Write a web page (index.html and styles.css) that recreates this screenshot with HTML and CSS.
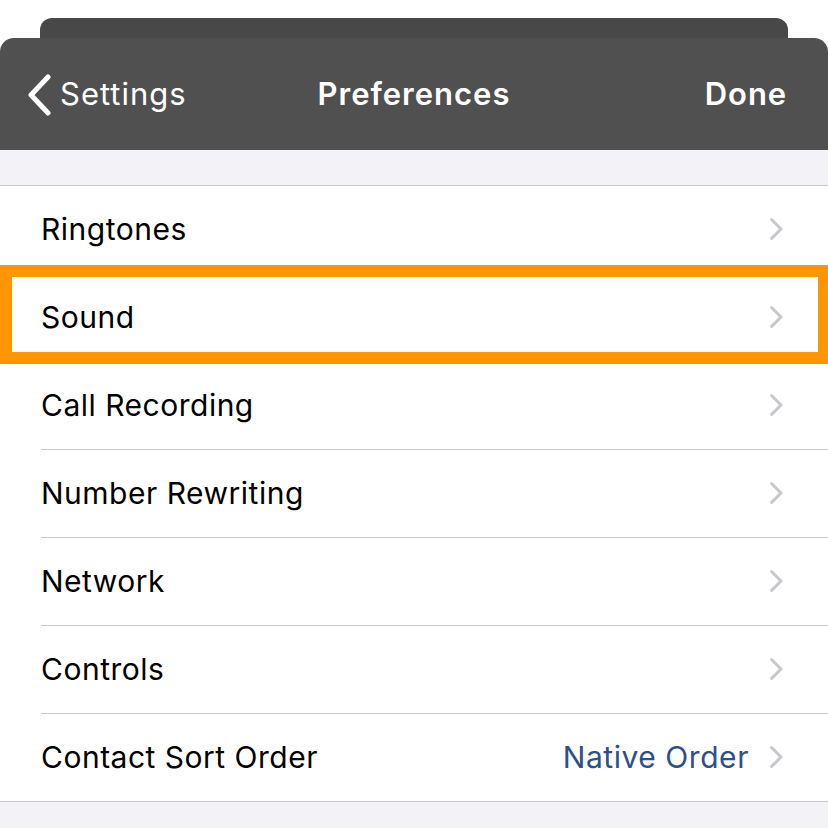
FILE: index.html
```html
<!DOCTYPE html>
<html>
<head>
<meta charset="utf-8">
<link rel="stylesheet" href="styles.css">
</head>
<body>
<div class="screen">
  <div class="sheet-back"></div>
  <div class="navbar">
    <div class="nav-left">
      <svg class="back-icon" width="26" height="42" viewBox="0 0 26 42"><path d="M22 3 L5 21 L22 39" fill="none" stroke="#fff" stroke-width="5" stroke-linecap="round" stroke-linejoin="round"/></svg>
      <span class="nav-back-text">Settings</span>
    </div>
    <div class="nav-title">Preferences</div>
    <div class="nav-right">Done</div>
  </div>
  <div class="gap"></div>
  <div class="list">
    <div class="row"><span class="label">Ringtones</span><svg class="chev" width="15" height="24" viewBox="0 0 15 24"><path d="M2.5 2.5 L12 12 L2.5 21.5" fill="none" stroke="#c7c7cc" stroke-width="3" stroke-linecap="round" stroke-linejoin="round"/></svg></div>
    <div class="row"><span class="label">Sound</span><svg class="chev" width="15" height="24" viewBox="0 0 15 24"><path d="M2.5 2.5 L12 12 L2.5 21.5" fill="none" stroke="#c7c7cc" stroke-width="3" stroke-linecap="round" stroke-linejoin="round"/></svg></div>
    <div class="row"><span class="label">Call Recording</span><svg class="chev" width="15" height="24" viewBox="0 0 15 24"><path d="M2.5 2.5 L12 12 L2.5 21.5" fill="none" stroke="#c7c7cc" stroke-width="3" stroke-linecap="round" stroke-linejoin="round"/></svg></div>
    <div class="row"><span class="label">Number Rewriting</span><svg class="chev" width="15" height="24" viewBox="0 0 15 24"><path d="M2.5 2.5 L12 12 L2.5 21.5" fill="none" stroke="#c7c7cc" stroke-width="3" stroke-linecap="round" stroke-linejoin="round"/></svg></div>
    <div class="row"><span class="label">Network</span><svg class="chev" width="15" height="24" viewBox="0 0 15 24"><path d="M2.5 2.5 L12 12 L2.5 21.5" fill="none" stroke="#c7c7cc" stroke-width="3" stroke-linecap="round" stroke-linejoin="round"/></svg></div>
    <div class="row"><span class="label">Controls</span><svg class="chev" width="15" height="24" viewBox="0 0 15 24"><path d="M2.5 2.5 L12 12 L2.5 21.5" fill="none" stroke="#c7c7cc" stroke-width="3" stroke-linecap="round" stroke-linejoin="round"/></svg></div>
    <div class="row last"><span class="label">Contact Sort Order</span><span class="value">Native Order</span><svg class="chev" width="15" height="24" viewBox="0 0 15 24"><path d="M2.5 2.5 L12 12 L2.5 21.5" fill="none" stroke="#c7c7cc" stroke-width="3" stroke-linecap="round" stroke-linejoin="round"/></svg></div>
  </div>
  <div class="footer-gap"></div>
  <div class="highlight"></div>
</div>
</body>
</html>
```
FILE: styles.css
```css
html, body {
  margin: 0;
  padding: 0;
  background: #ffffff;
}
.screen {
  position: relative;
  width: 828px;
  height: 828px;
  overflow: hidden;
  font-family: Inter, "Liberation Sans", sans-serif;
  background: #ffffff;
}
.sheet-back {
  margin: 18px 40px 0;
  height: 20px;
  background: #484848;
  border-radius: 12px 12px 0 0;
}
.navbar {
  height: 112px;
  background: #505050;
  border-radius: 14px 14px 0 0;
  display: flex;
  align-items: center;
  justify-content: space-between;
  padding: 0 41px 0 26px;
  color: #ffffff;
  position: relative;
}
.nav-left {
  display: flex;
  align-items: center;
  gap: 8px;
}
.back-icon {
  display: block;
  margin-top: 2px;
}
.nav-back-text {
  font-size: 31px;
  font-weight: 400;
  letter-spacing: 1px;
  margin-bottom: 1px;
}
.nav-title {
  position: absolute;
  left: 0;
  right: 0;
  text-align: center;
  font-size: 31px;
  font-weight: 600;
  letter-spacing: 1px;
  padding-bottom: 1px;
  pointer-events: none;
}
.nav-right {
  font-size: 31px;
  font-weight: 600;
  letter-spacing: 0.9px;
  margin-bottom: 1px;
}
.gap {
  height: 35px;
  background: #f2f2f7;
  border-bottom: 1px solid #c8c7cc;
}
.list {
  background: #ffffff;
}
.row {
  height: 87px;
  display: flex;
  align-items: center;
  margin-left: 41px;
  padding-right: 44px;
  border-bottom: 1px solid #c8c7cc;
  font-size: 30px;
  color: #000000;
}
.row.last {
  margin-left: 0;
  padding-left: 41px;
}
.label {
  flex: 1;
  letter-spacing: 0.5px;
  margin-top: -2px;
}
.value {
  color: #2e4f8c;
  margin-right: 20px;
  letter-spacing: 0.55px;
  margin-top: -2px;
}
.chev {
  display: block;
  margin-top: -1px;
}
.footer-gap {
  height: 40px;
  background: #f2f2f7;
}
.highlight {
  position: absolute;
  top: 265px;
  left: 0;
  width: 806px;
  height: 75px;
  border: 12px solid #ff9600;
}
```
